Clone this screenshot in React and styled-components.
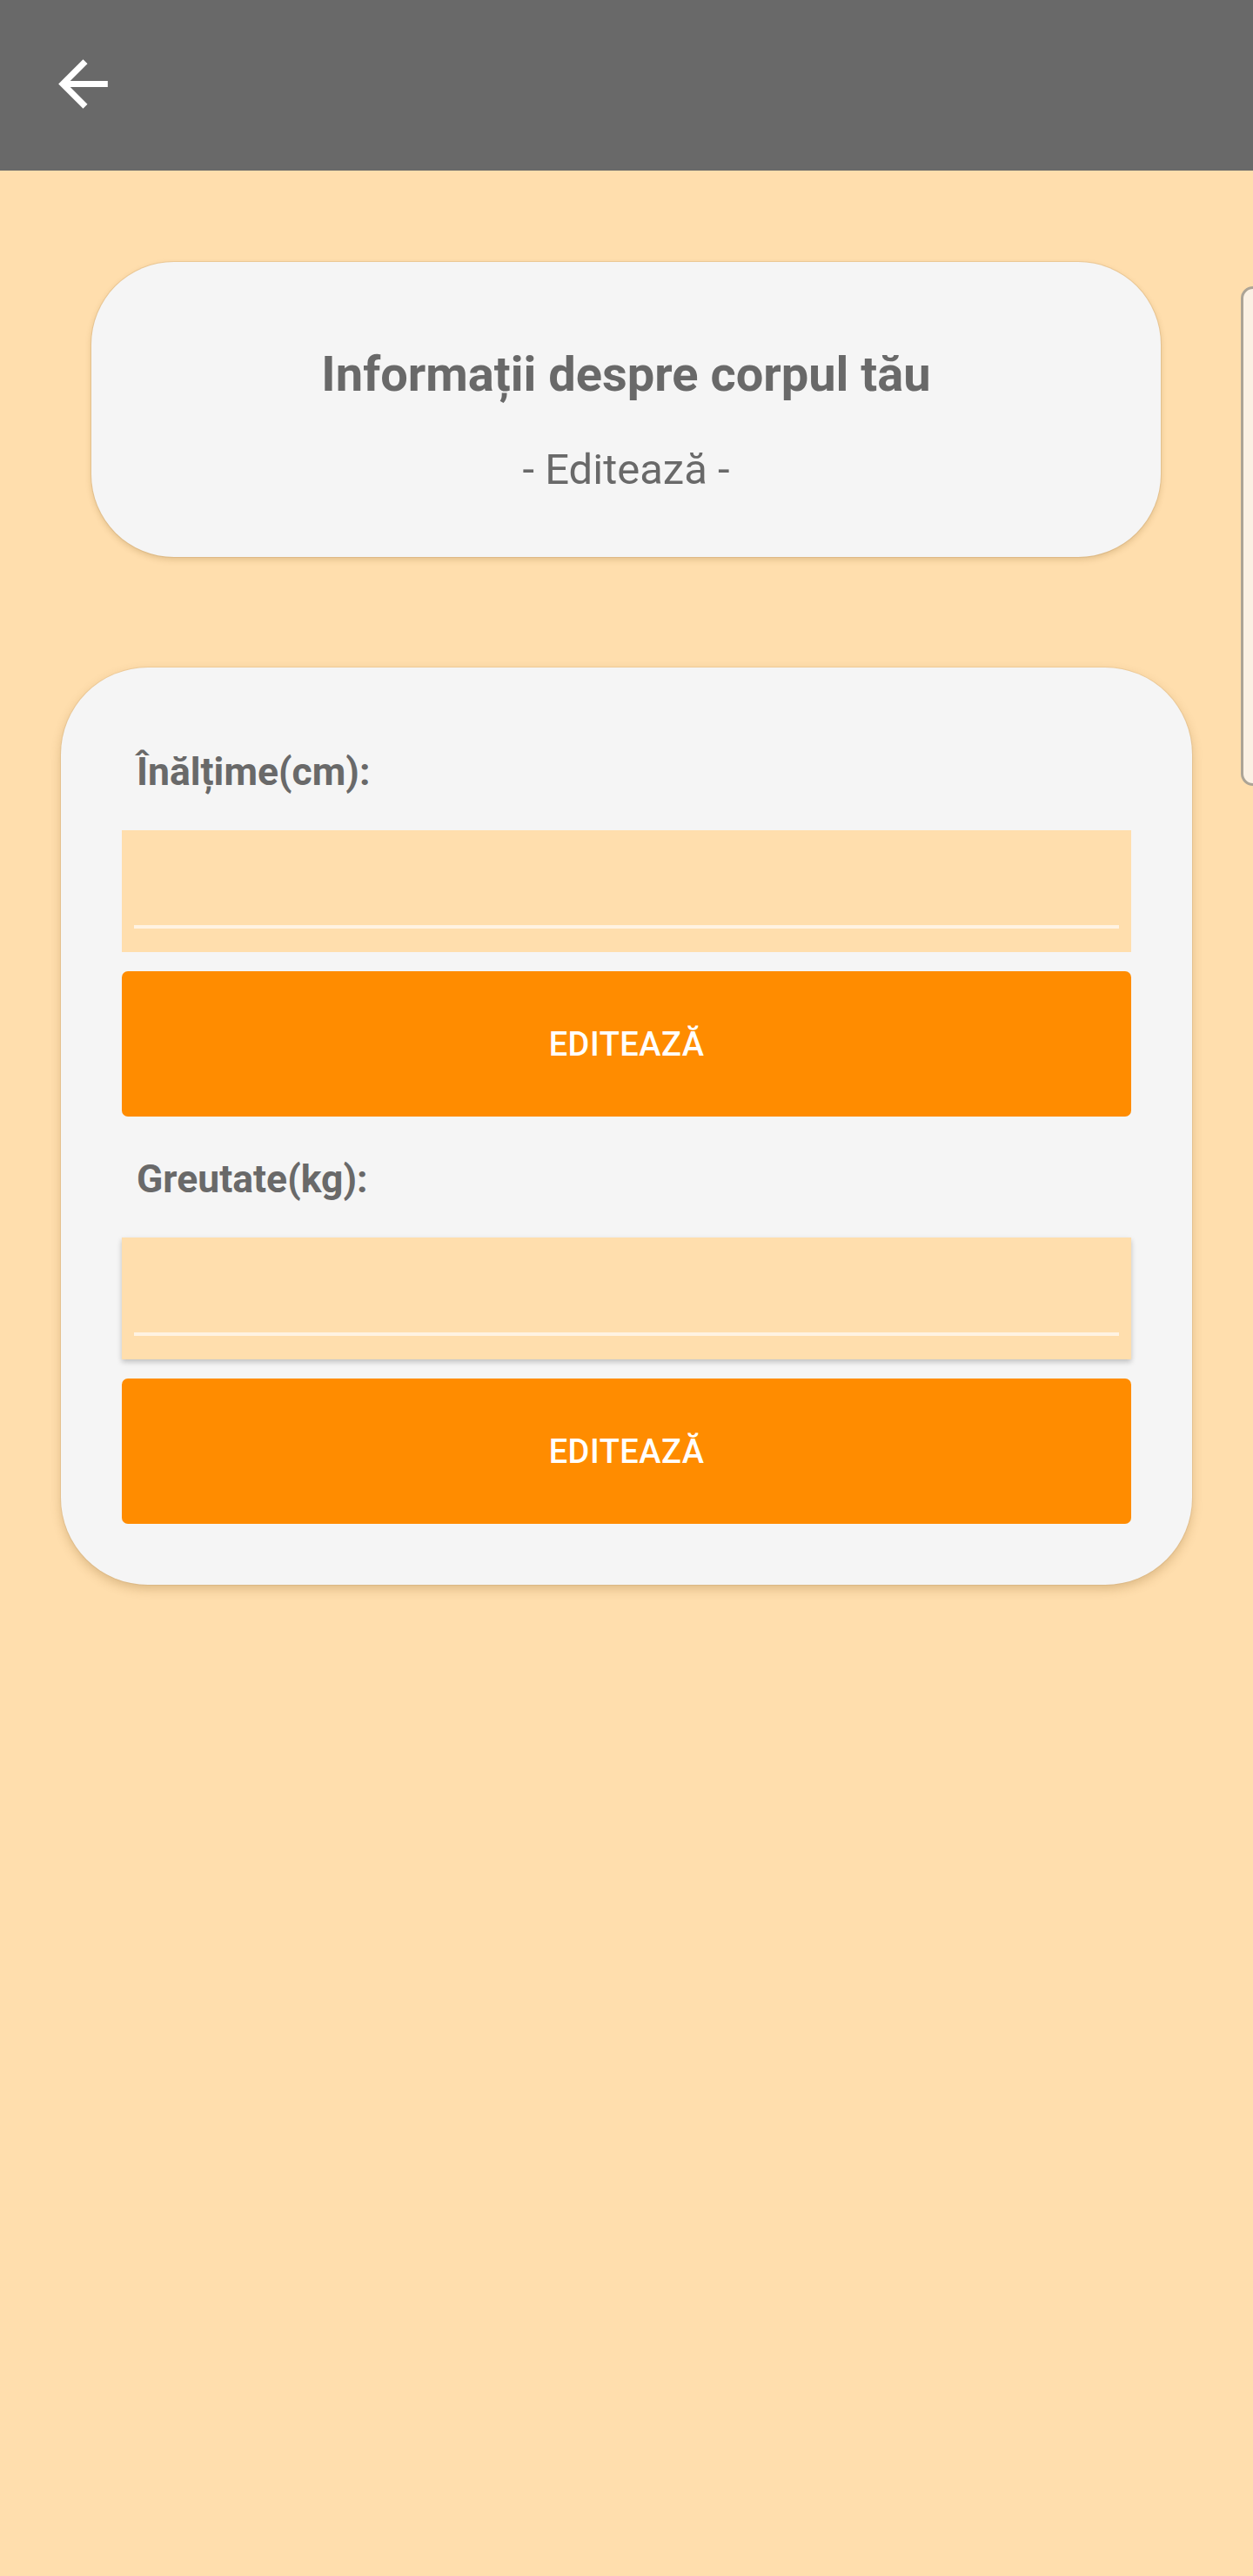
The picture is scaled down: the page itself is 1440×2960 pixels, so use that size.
import React from 'react';
import styled, { createGlobalStyle } from 'styled-components';

const Global = createGlobalStyle`
  html, body {
    margin: 0;
    padding: 0;
    background: #ffdead;
  }
  body {
    font-family: Roboto, "Noto Sans", sans-serif;
  }
`

const Page = styled.div`
  min-height: 2960px;
  background: #ffdead;
  overflow: hidden;
`

const Toolbar = styled.header`
  height: 196px;
  background: #696969;
  display: flex;
  align-items: center;
  padding-left: 53px;
  box-sizing: border-box;
`

const BackButton = styled.button`
  width: 85px;
  height: 85px;
  padding: 0;
  margin-top: -3px;
  border: none;
  background: none;
  color: #fff;
  display: flex;
  cursor: pointer;

  svg {
    width: 85px;
    height: 85px;
  }
`

const Carousel = styled.section`
  display: flex;
  align-items: flex-start;
  gap: 92px;
  height: 339px;
  padding-left: 105px;
  margin-top: 105px;
`

const InfoCard = styled.div`
  flex-shrink: 0;
  width: 1229px;
  height: 339px;
  box-sizing: border-box;
  padding-top: 96px;
  border-radius: 95px;
  background: #f5f5f5;
  box-shadow: 0 0 0 1px rgba(190, 150, 100, 0.25), 0 3px 7px rgba(120, 80, 20, 0.22);
  display: flex;
  flex-direction: column;
  align-items: center;
  color: #696969;
`

const Title = styled.h1`
  margin: 0;
  font-size: 56px;
  font-weight: 700;
  line-height: 66px;
`

const Subtitle = styled.p`
  margin: 48px 0 0;
  font-size: 49px;
  font-weight: 400;
  line-height: 57px;
`

const PeekCard = styled.div`
  flex-shrink: 0;
  width: 300px;
  height: 574px;
  margin-top: 28px;
  box-sizing: border-box;
  border: 3px solid #aca496;
  border-radius: 14px;
  background: #fbf1e4;
`

const FormCard = styled.section`
  margin: 127px 70px 0;
  padding: 93px 70px 70px;
  border-radius: 100px;
  background: #f5f5f5;
  box-shadow: 0 0 0 1px rgba(190, 150, 100, 0.2), 0 5px 12px rgba(120, 80, 20, 0.25);
  display: flex;
  flex-direction: column;
  gap: 45px;
`

const Field = styled.div`
  display: flex;
  flex-direction: column;
`

const Label = styled.label`
  padding-left: 17px;
  font-size: 44.5px;
  font-weight: 700;
  line-height: 54px;
  color: #696969;
  margin-bottom: 40px;
`

const InputBox = styled.div`
  height: 140px;
  padding: 0 14px;
  box-sizing: border-box;
  background: #ffdead;
  display: flex;
  align-items: flex-end;
  box-shadow: ${p => (p.$raised ? '0 3px 6px rgba(0, 0, 0, 0.22)' : 'none')};
`

const Input = styled.input`
  width: 100%;
  height: 60px;
  margin-bottom: 27px;
  padding: 0 4px;
  border: none;
  border-bottom: 4px solid #fff3e2;
  background: transparent;
  font-family: Roboto, sans-serif;
  font-size: 46px;
  color: #333;
  outline: none;
`

const EditButton = styled.button`
  height: 167px;
  margin-top: 22px;
  border: none;
  border-radius: 7px;
  background: #ff8c00;
  color: #fff;
  font-family: Roboto, sans-serif;
  font-size: 38px;
  font-weight: 500;
  letter-spacing: 0.5px;
  cursor: pointer;
`

const ArrowBack = () => (
  <svg viewBox="0 0 24 24" fill="currentColor">
    <path d="M20 11H7.83l5.59-5.59L12 4l-8 8 8 8 1.41-1.41L7.83 13H20v-2z" />
  </svg>
)

const fields = [
  { id: 'height', label: 'Înălțime(cm):' },
  { id: 'weight', label: 'Greutate(kg):', raised: true },
]

const App = () => {
  return (
    <Page>
      <Global />
      <Toolbar>
        <BackButton aria-label="Înapoi"><ArrowBack /></BackButton>
      </Toolbar>
      <Carousel>
        <InfoCard>
          <Title>Informații despre corpul tău</Title>
          <Subtitle>- Editează -</Subtitle>
        </InfoCard>
        <PeekCard />
      </Carousel>
      <FormCard>
        {fields.map(f => (
          <Field key={f.id}>
            <Label htmlFor={f.id}>{f.label}</Label>
            <InputBox $raised={f.raised}>
              <Input id={f.id} type="number" />
            </InputBox>
            <EditButton>EDITEAZĂ</EditButton>
          </Field>
        ))}
      </FormCard>
    </Page>
  );
};

export default App;
